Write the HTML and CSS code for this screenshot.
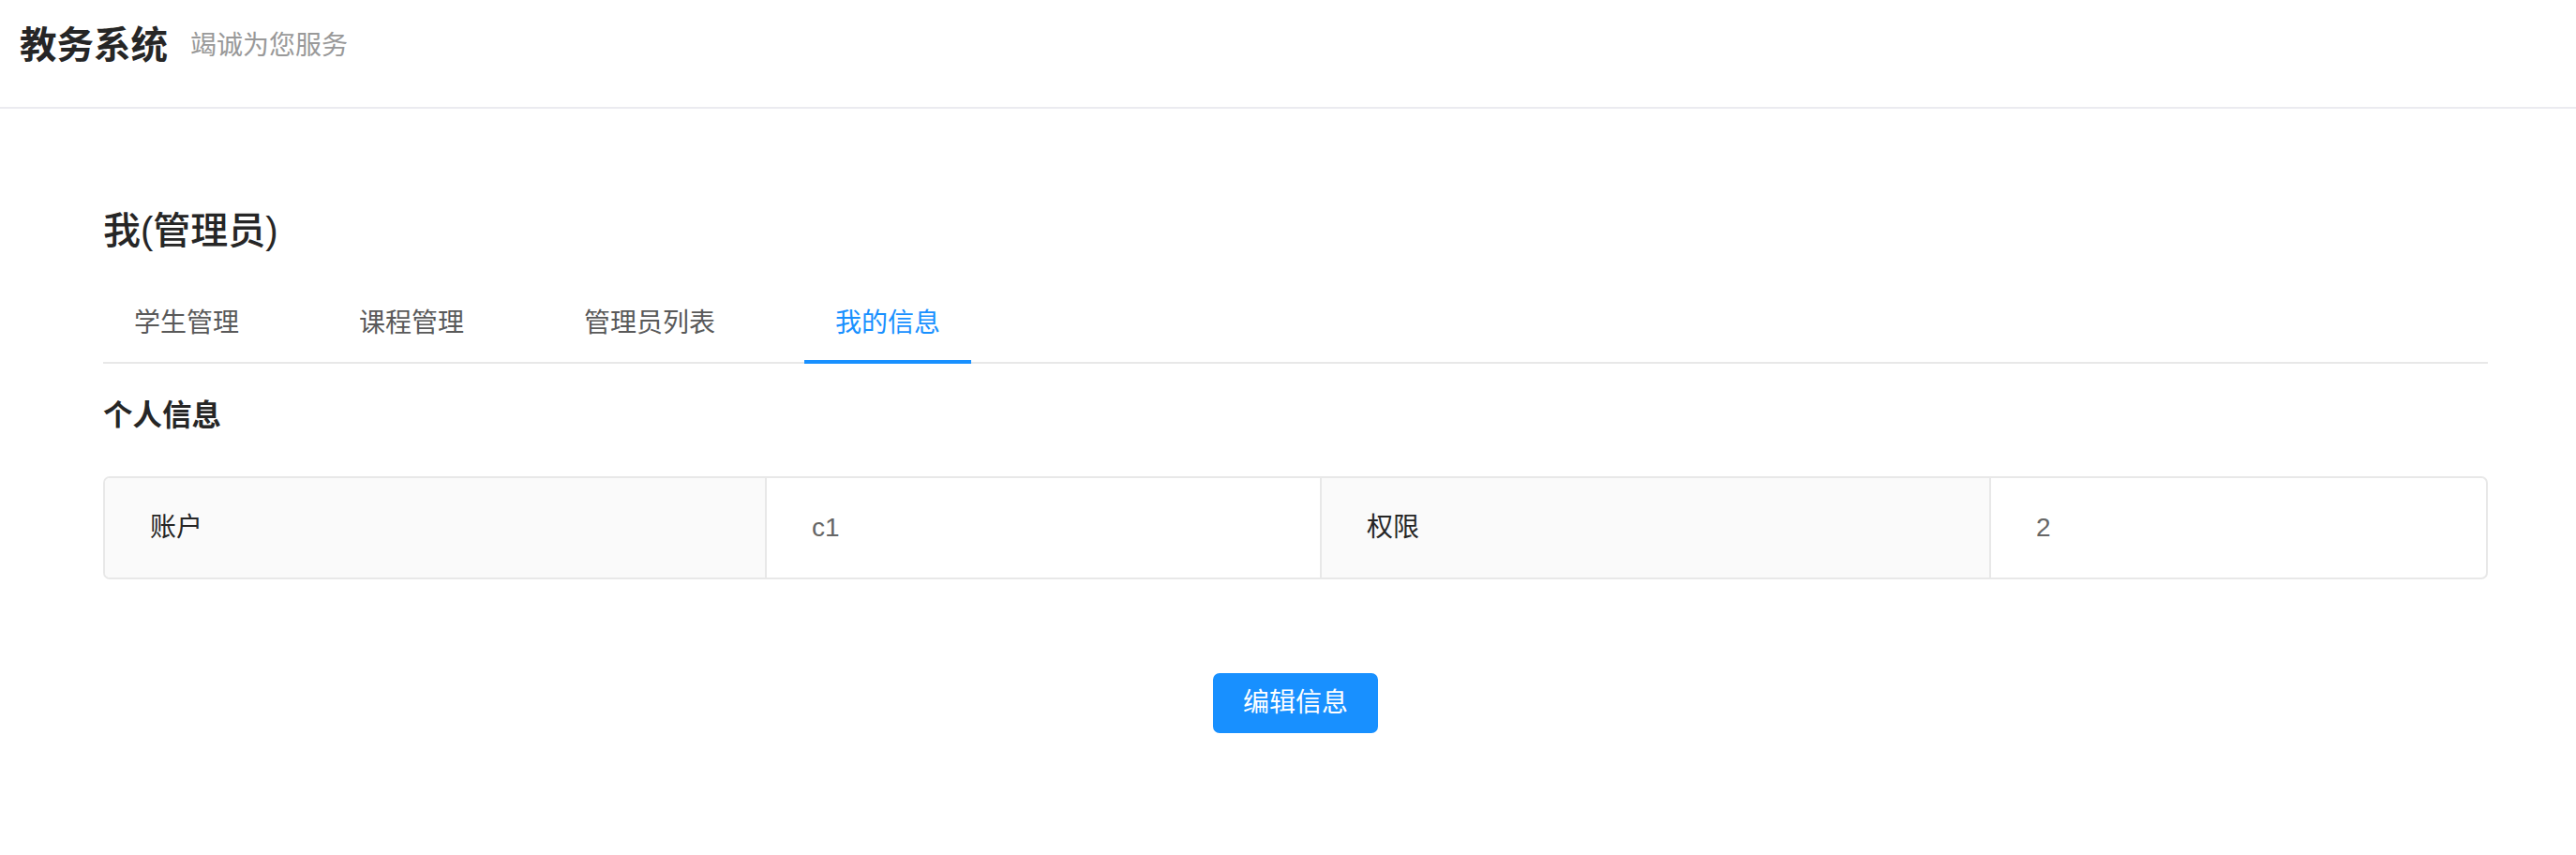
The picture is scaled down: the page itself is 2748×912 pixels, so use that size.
FILE: index.html
```html
<!DOCTYPE html>
<html lang="zh-CN">
<head>
<meta charset="utf-8">
<title>教务系统</title>
<link rel="stylesheet" href="styles.css">
</head>
<body>
<header class="app-header">
  <span class="app-title">教务系统</span>
  <span class="app-subtitle">竭诚为您服务</span>
</header>
<main class="page">
  <h1 class="page-title">我(管理员)</h1>
  <nav class="tabs">
    <div class="tab">学生管理</div>
    <div class="tab">课程管理</div>
    <div class="tab">管理员列表</div>
    <div class="tab tab-active">我的信息</div>
  </nav>
  <h2 class="section-title">个人信息</h2>
  <div class="desc">
    <div class="desc-label">账户</div>
    <div class="desc-value">c1</div>
    <div class="desc-label">权限</div>
    <div class="desc-value">2</div>
  </div>
  <div class="actions">
    <button class="btn-primary" type="button">编辑信息</button>
  </div>
</main>
</body>
</html>
```
FILE: styles.css
```css
* { box-sizing: border-box; }
html, body { margin: 0; padding: 0; background: #fff; }
body {
  font-family: "Liberation Sans", "Noto Sans CJK SC", sans-serif;
  color: #262626;
}
.app-header {
  height: 116px;
  padding: 0 21px 16px;
  display: flex;
  align-items: center;
  border-bottom: 2px solid #ebebf0;
}
.app-title {
  font-size: 39.5px;
  font-weight: 700;
  color: #262626;
  line-height: 1;
}
.app-subtitle {
  margin-left: 24px;
  font-size: 28px;
  color: #999;
  line-height: 1;
}
.page {
  padding: 0 94px 0 110px;
}
.page-title {
  margin: 102px 0 0;
  font-size: 40px;
  line-height: 56px;
  font-weight: 500;
  color: #262626;
}
.tabs {
  margin-top: 30px;
  display: flex;
  border-bottom: 2px solid #e8e8e8;
}
.tab {
  position: relative;
  padding: 20px 33px;
  margin-right: 62px;
  font-size: 28px;
  line-height: 42px;
  color: #595959;
}
.tab-active { color: #1890ff; }
.tab-active::after {
  content: "";
  position: absolute;
  left: 0;
  right: 0;
  bottom: -2px;
  height: 4px;
  background: #1890ff;
}
.section-title {
  margin: 31px 0 41px;
  font-size: 31.5px;
  line-height: 48px;
  font-weight: 700;
  color: #262626;
}
.desc {
  display: grid;
  grid-template-columns: 704px 592px 714px 1fr;
  border: 2px solid #e8e8e8;
  border-radius: 7px;
  overflow: hidden;
}
.desc-label, .desc-value {
  padding: 32px 48px;
  font-size: 28px;
  line-height: 42px;
}
.desc-label {
  background: #fafafa;
  color: #262626;
}
.desc-value { color: #666; }
.desc > div + div { border-left: 2px solid #e8e8e8; }
.actions {
  margin-top: 100px;
  display: flex;
  justify-content: center;
}
.btn-primary {
  height: 64px;
  padding: 0 30px;
  border: 2px solid #1890ff;
  border-radius: 7px;
  background: #1890ff;
  color: #fff;
  font-family: "Liberation Sans", "Noto Sans CJK SC", sans-serif;
  font-size: 28px;
  line-height: 60px;
  cursor: pointer;
}
```
